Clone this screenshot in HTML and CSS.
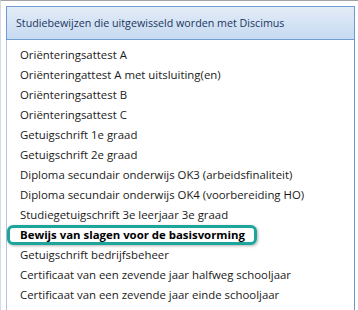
FILE: index.html
```html
<!DOCTYPE html>
<html lang="nl">
<head>
    <meta charset="UTF-8">
    <title>Studiebewijzen</title>
    <link rel="stylesheet" href="styles.css">
</head>
<body>
    <!-- buitenste venster -->
    <div class="frame">
        <div class="panel">
            <!-- kop van de lijst -->
            <div class="head">Studiebewijzen die uitgewisseld worden met Discimus</div>
            <!-- de lijst zelf -->
            <ul class="list">
                <li class="item">Oriënteringsattest A</li>
                <li class="item">Oriënteringattest A met uitsluiting(en)</li>
                <li class="item">Oriënteringsattest B</li>
                <li class="item">Oriënteringsattest C</li>
                <li class="item">Getuigschrift 1e graad</li>
                <li class="item">Getuigschrift 2e graad</li>
                <li class="item">Diploma secundair onderwijs OK3 (arbeidsfinaliteit)</li>
                <li class="item">Diploma secundair onderwijs OK4 (voorbereiding HO)</li>
                <li class="item">Studiegetuigschrift 3e leerjaar 3e graad</li>
                <li class="item selected">Bewijs van slagen voor de basisvorming</li>
                <li class="item">Getuigschrift bedrijfsbeheer</li>
                <li class="item">Certificaat van een zevende jaar halfweg schooljaar</li>
                <li class="item">Certificaat van een zevende jaar einde schooljaar</li>
            </ul>
        </div>
    </div>
</body>
</html>
```

FILE: styles.css
```css
body{
    margin: 0;
    background-color: #fff;
    font-family: "Open Sans", "Liberation Sans", sans-serif;
}
/* venster */
.frame{
    height: 310px;
    box-sizing: border-box;
    border-top: 1px solid #a3a3a3;
    border-left: 1px solid #d3dbe6;
    padding: 5px 0 0 5px;
    overflow: hidden;
}
.panel{
    width: 349px;
}
/* kop */
.head{
    height: 34px;
    box-sizing: border-box;
    border: 1px solid #6f9cd3;
    background: linear-gradient(#e3ecf7, #c6daf1);
    color: #1b3560;
    font-size: 10.7px;
    line-height: 32px;
    padding-left: 9px;
}
/* lijst */
.list{
    list-style: none;
    margin: 0;
    padding: 5px 0 0 0;
    border-left: 1px solid #b3c5dc;
    border-right: 1px solid #6a94c8;
    height: 300px;
}
.item{
    height: 20px;
    box-sizing: border-box;
    padding-left: 13px;
    font-size: 11.4px;
    line-height: 20px;
    color: #1a1a1a;
    white-space: nowrap;
}
/* geselecteerde rij */
.item.selected{
    width: fit-content;
    border: 3px solid #1ea59b;
    border-radius: 6px;
    padding: 0 9px 0 10px;
    line-height: 14px;
    font-weight: bold;
    color: #000;
    box-shadow: 1px 1px 3px rgba(0, 0, 0, 0.3);
}
```
